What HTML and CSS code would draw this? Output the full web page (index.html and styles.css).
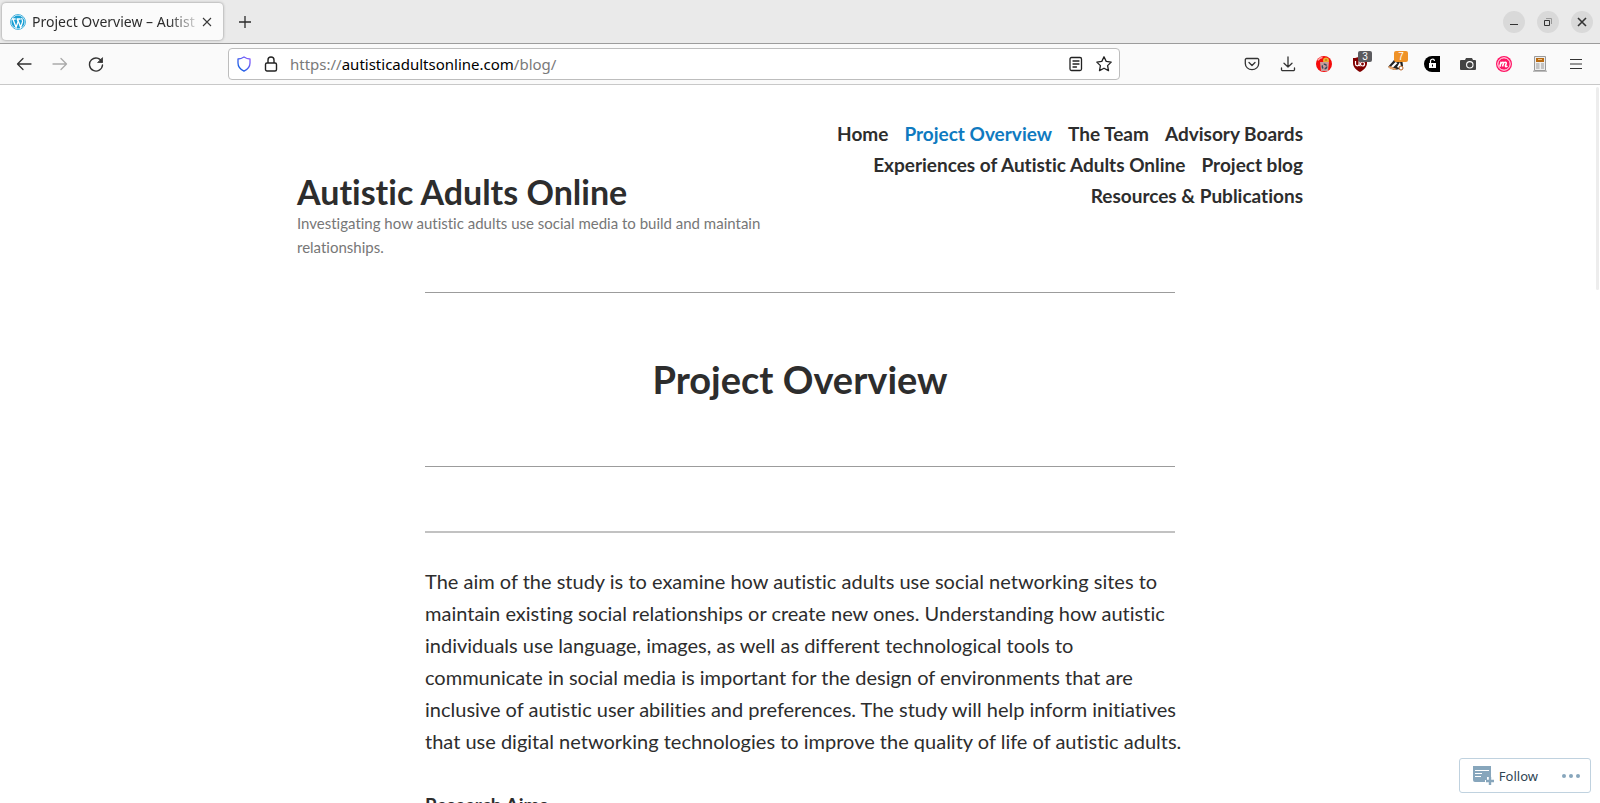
FILE: index.html
```html
<!DOCTYPE html>
<html lang="en">
<head>
<meta charset="utf-8">
<title>Project Overview – Autistic Adults Online</title>
<link rel="stylesheet" href="styles.css">
</head>
<body>
<div class="window">
  <div class="titlebar">
    <div class="tab">
      <svg class="tab-icon" viewBox="0 0 24 24" aria-hidden="true"><circle cx="12" cy="12" r="11.2" fill="#fff" stroke="#1a9fd4" stroke-width="1.2"/><circle cx="12" cy="12" r="9.8" fill="#1a9fd4"/><path d="M3 7.500h5.500M10 7.500h6M4.500 8l4.600 12 3-8.500L10.700 8M11.500 8l4.400 12 2.800-8c.9-3-1.600-3.700-1-6" fill="none" stroke="#fff" stroke-width="1.900"/></svg>
      <span class="tab-title">Project Overview – Autist</span>
      <button class="plain" aria-label="Close tab"><svg width="10" height="10" viewBox="0 0 10 10"><path d="M1 1l8 8M9 1L1 9" stroke="#3a3a3a" stroke-width="1.100"/></svg></button>
    </div>
    <button class="plain new-tab" aria-label="New tab"><svg width="12" height="12" viewBox="0 0 12 12"><path d="M6 0v12M0 6h12" stroke="#2b2b2b" stroke-width="1.300"/></svg></button>
    <div class="controls">
      <button class="control" aria-label="Minimize"><svg width="10" height="10" viewBox="0 0 10 10"><path d="M1 7.500h8" stroke="#333"/></svg></button>
      <button class="control" aria-label="Restore"><svg width="10" height="10" viewBox="0 0 10 10" fill="none"><path d="M3 1.500h5.500V7" stroke="#999"/><path d="M1.500 3.500h5v5h-5z" stroke="#333"/></svg></button>
      <button class="control" aria-label="Close"><svg width="10" height="10" viewBox="0 0 10 10"><path d="M1 1l8 8M9 1L1 9" stroke="#333" stroke-width="1.600"/></svg></button>
    </div>
  </div>
  <div class="toolbar">
    <div class="history">
      <button class="plain" aria-label="Back"><svg width="16" height="16" viewBox="0 0 16 16" fill="none" stroke="#333" stroke-width="1.300" stroke-linecap="round" stroke-linejoin="round"><path d="M15 8H1.500M7 2.500L1.500 8 7 13.500"/></svg></button>
      <button class="plain" aria-label="Forward"><svg width="16" height="16" viewBox="0 0 16 16" fill="none" stroke="#aaa" stroke-width="1.300" stroke-linecap="round" stroke-linejoin="round"><path d="M1 8h13.500M9 2.500L14.500 8 9 13.500"/></svg></button>
      <button class="plain" aria-label="Reload"><svg width="16" height="16" viewBox="0 0 16 16" fill="none" stroke="#333" stroke-width="1.400" stroke-linecap="round"><path d="M14 6A6.500 6.500 0 1 0 14.500 9"/><path d="M14.500 2v4.500H10z" fill="#333" stroke-width=".8"/></svg></button>
    </div>
    <form class="address">
      <svg width="16" height="16" viewBox="0 0 16 16" fill="none"><defs><linearGradient id="shield" x1="0" y1="1" x2="1" y2="0"><stop offset="0" stop-color="#0060df"/><stop offset="1" stop-color="#9059ff"/></linearGradient></defs><path d="M8 1c2 1.300 4 2 6 2v4c0 4-2.500 6.500-6 8.200C4.500 13.500 2 11 2 7V3c2 0 4-.7 6-2z" stroke="url(#shield)" stroke-width="1.300" stroke-linejoin="round"/></svg>
      <svg width="14" height="16" viewBox="0 0 14 16" fill="none" stroke="#222" stroke-width="1.400"><rect x="1.500" y="7" width="11" height="8" rx="1.500"/><path d="M4 7V4a3 3 0 0 1 6 0v3"/></svg>
      <div class="url" role="textbox" aria-label="Address" contenteditable="true"><span>https://</span>autisticadultsonline.com<span>/blog/</span></div>
      <button type="button" class="plain" aria-label="Reader view"><svg width="16" height="16" viewBox="0 0 16 16" fill="none" stroke="#222" stroke-width="1.300" stroke-linecap="round"><rect x="2" y="1.500" width="11.500" height="13" rx="1.500"/><path d="M5 5h6M5 8h6M5 11h3.500"/></svg></button>
      <button type="button" class="plain" aria-label="Bookmark"><svg width="16" height="16" viewBox="0 0 16 16" fill="none" stroke="#222" stroke-width="1.300" stroke-linejoin="round"><path d="M8 .8l2.200 4.600 5 .7-3.600 3.500.9 5L8 12.200l-4.500 2.400.9-5L.8 6.100l5-.7z"/></svg></button>
    </form>
    <div class="extensions">
      <button class="plain" aria-label="Pocket"><svg width="16" height="16" viewBox="0 0 16 16" fill="none" stroke="#333" stroke-width="1.300" stroke-linecap="round" stroke-linejoin="round"><path d="M2.500 2.500h11a1.200 1.200 0 0 1 1.200 1.200V7.500a6.700 6.200 0 0 1-13.400 0V3.700a1.200 1.200 0 0 1 1.200-1.200zM5 6.500l3 3 3-3"/></svg></button>
      <button class="plain" aria-label="Downloads"><svg width="16" height="16" viewBox="0 0 16 16" fill="none" stroke="#333" stroke-width="1.300" stroke-linecap="round" stroke-linejoin="round"><path d="M8 1v10M4 7.300L8 11l4-3.700M1.500 12v1.500a1.200 1.200 0 0 0 1.200 1.200h10.600a1.200 1.200 0 0 0 1.200-1.200V12"/></svg></button>
      <button class="plain" aria-label="Cookie cleaner"><svg width="16" height="16" viewBox="0 0 16 16"><circle cx="8" cy="8" r="8" fill="#f50a0a"/><path d="M2 4.500C3 2.500 5 1.500 6.500 1.500" stroke="#ff9b9b" stroke-width="1.500" fill="none"/><circle cx="10" cy="4.500" r="3" fill="#eab030"/><circle cx="10" cy="4" r=".8" fill="#9d5814"/><path d="M4 6h9l-1 9H5z" fill="#c99b9b"/><circle cx="8.500" cy="10.500" r="2.200" fill="none" stroke="#34495e" stroke-width="1.400" stroke-dasharray="3 1.300"/></svg></button>
      <button class="plain" aria-label="uBlock, 3 blocked"><svg width="16" height="16" viewBox="0 0 16 16"><path d="M8 0c2 1.500 4 2 7 2v5c0 4-3 7-7 9-4-2-7-5-7-9V2c3 0 5-.5 7-2z" fill="#800000"/><path d="M3.500 5v3a1.800 1.800 0 0 0 3.600 0V5v3.500c0 1 1 1.500 1.500 1.500" fill="none" stroke="#fff" stroke-width="1.200"/><circle cx="10.500" cy="8" r="2" fill="none" stroke="#fff" stroke-width="1.200"/></svg><span class="badge">3</span></button>
      <button class="plain" aria-label="Privacy Badger, 7 trackers"><svg width="16" height="16" viewBox="0 0 16 16"><path d="M0 11L6 4l8-2 1 8-3 3-6 1z" fill="#222"/><path d="M3 10.500l4.500-4.500 2 1-4.500 4.500zM9 11l3-5 1 4-2 2z" fill="#fff"/><path d="M0 10.500c2-.5 3.500 0 5 1l4 1.500-2 1-5-1z" fill="#e8a56b"/><circle cx="13" cy="12" r="2" fill="#fff" stroke="#b65d1b"/></svg><span class="badge orange">7</span></button>
      <button class="plain" aria-label="Unlock"><svg width="16" height="16" viewBox="0 0 16 16"><path d="M16 0v16H8A8 8 0 0 1 8 0z" fill="#000"/><path d="M5 7h7v5H5z" fill="#fff"/><path d="M6.500 7V5.500a2 2 0 0 1 4-.500" fill="none" stroke="#fff" stroke-width="1.200"/><path d="M8.500 8.500v2" stroke="#000"/></svg></button>
      <button class="plain" aria-label="Screenshot"><svg width="16" height="16" viewBox="0 0 16 16"><path d="M1 4h4l1-2h6l1 2h2a1 1 0 0 1 1 1v8a1 1 0 0 1-1 1H1a1 1 0 0 1-1-1V5a1 1 0 0 1 1-1z" fill="#444"/><circle cx="9.800" cy="8.800" r="3.200" fill="#444" stroke="#fff" stroke-width="1.100"/></svg></button>
      <button class="plain" aria-label="Mail tool"><svg width="16" height="16" viewBox="0 0 16 16" fill="none"><circle cx="8" cy="8" r="8" fill="#ff1464"/><circle cx="8" cy="8" r="6.200" stroke="#fff" stroke-width="1"/><path d="M3.800 10.800l1.400-5M4.800 7.500c1.500-2 3.200-1.500 2.600 0l-.9 3M7 7.500c1.500-2 3.700-1.500 3.200 0l-.7 2c-.3 1.500 1 1.300 2 .5" stroke="#fff" stroke-width="1.600"/></svg></button>
      <button class="plain" aria-label="News reader"><svg width="16" height="16" viewBox="0 0 16 16"><path d="M1 14.500h14v1.500H1z" fill="#bbb"/><path d="M2.500.5h11v14h-11z" fill="#eee" stroke="#999"/><path d="M4 2h8v4H4z" fill="#b86a12"/><path d="M4 8h3.500M4 10h3.500M4 12h3.500M9 8h3M9 10h3M9 12h3" stroke="#999"/><path d="M6 3.500h4" stroke="#ecc183"/></svg></button>
      <button class="plain" aria-label="Menu"><svg width="16" height="16" viewBox="0 0 16 16"><path d="M2 3.500h12M2 8h12M2 12.500h12" stroke="#333" stroke-width="1.200"/></svg></button>
    </div>
  </div>
  <div class="viewport">
    <div class="scrollbar"></div>
    <header class="site-header">
      <div class="branding">
        <p class="site-title"><a href="#">Autistic Adults Online</a></p>
        <p class="tagline">Investigating how autistic adults use social media to build and maintain relationships.</p>
      </div>
      <nav class="site-nav">
        <a href="#">Home</a>
        <a href="#" class="current">Project Overview</a>
        <a href="#">The Team</a>
        <a href="#">Advisory Boards</a>
        <a href="#">Experiences of Autistic Adults Online</a>
        <a href="#">Project blog</a>
        <a href="#">Resources &amp; Publications</a>
      </nav>
    </header>
    <main class="content">
      <h1 class="page-title">Project Overview</h1>
      <hr class="divider">
      <p class="lead">The aim of the study is to examine how autistic adults use social networking sites to<br>maintain existing social relationships or create new ones. Understanding how autistic<br>individuals use language, images, as well as different technological tools to<br>communicate in social media is important for the design of environments that are<br>inclusive of autistic user abilities and preferences. The study will help inform initiatives<br>that use digital networking technologies to improve the quality of life of autistic adults.</p>
      <h2 class="subhead">Research Aims</h2>
    </main>
    <div class="follow">
      <button class="follow-button"><svg width="22" height="20" viewBox="0 0 22 20"><path d="M0 0h18v11h-4v3h-2v2H2a2 2 0 0 1-2-2z" fill="#87a6bc"/><path d="M2 4.500h14M2 7.500h7M2 10.500h6" stroke="#fff" stroke-width="1.200"/><path d="M17 11v8M13 15h8" stroke="#87a6bc" stroke-width="2.400"/></svg>Follow</button>
      <button class="plain" aria-label="More"><svg width="18" height="4" viewBox="0 0 18 4" fill="#87a6bc"><circle cx="2" cy="2" r="2"/><circle cx="9" cy="2" r="2"/><circle cx="16" cy="2" r="2"/></svg></button>
    </div>
  </div>
</div>
</body>
</html>
```
FILE: styles.css
```css
* { box-sizing: border-box; }
body { margin: 0; background: #fff; font-family: "Noto Sans", "Open Sans", sans-serif; color: #2d2d2d; }
a { color: inherit; text-decoration: none; }
p, h1, h2 { margin: 0; }
svg { display: block; flex: none; }
.window { display: flex; flex-direction: column; height: 100vh; overflow: hidden; }
.plain { display: flex; padding: 0; border: 0; background: none; position: relative; }

.titlebar { display: flex; align-items: center; flex: none; height: 44px; padding: 0 7px 0 2px; background: #eaeaea; border-bottom: 1px solid #9c9c9c; }
.tab { display: flex; align-items: center; width: 221px; height: 37px; padding: 0 11px 0 8px; border-radius: 4px; background: #fbfbfb; box-shadow: 0 0 3px #888; }
.tab-icon { width: 16px; height: 16px; margin-right: 6px; }
.tab-title { flex: 1; overflow: hidden; white-space: nowrap; font-size: 14px; mask-image: linear-gradient(to right, #000 80%, transparent); }
.new-tab { margin-left: 16px; }
.controls { display: flex; gap: 12px; margin-left: auto; }
.control { display: flex; align-items: center; justify-content: center; width: 22px; height: 22px; padding: 0; border: 0; border-radius: 50%; background: #d9d9d9; }

.toolbar { display: flex; align-items: center; flex: none; height: 41px; padding: 0 16px; background: #fafafa; border-bottom: 1px solid #c8c8c8; }
.history { display: flex; gap: 20px; width: 212px; }
.address { display: flex; align-items: center; gap: 12px; flex: 1; max-width: 892px; height: 32px; padding: 0 7px; border: 1px solid #bdbdbd; border-radius: 4px; background: #fff; }
.url { flex: 1; font-size: 15px; color: #000; white-space: nowrap; outline: 0; }
.url span { color: #7a7a7a; }
.extensions { display: flex; gap: 20px; margin-left: auto; }
.badge { position: absolute; left: 6px; top: -5px; width: 14px; height: 11px; border-radius: 2px; background: #5b5b5f; color: #fff; font-size: 10px; line-height: 11px; text-align: center; }
.badge.orange { background: #ef9227; }

.viewport { position: relative; flex: 1; min-height: 0; overflow: hidden; }
.scrollbar { position: absolute; top: 2px; right: 1px; width: 3px; height: 203px; border-radius: 2px; background: #ededed; }
.site-header, .content { font-family: Lato, "Noto Sans", sans-serif; font-variant-ligatures: none; }
.site-header { display: flex; justify-content: space-between; max-width: 1006px; margin: 0 auto; padding: 33px 0; }
.branding { width: 484px; padding-top: 55px; }
.site-title { font-size: 34px; line-height: 38px; font-weight: 700; white-space: nowrap; }
.tagline { font-size: 15px; line-height: 24px; color: #777; }
.site-nav { display: flex; flex-wrap: wrap; justify-content: flex-end; align-content: flex-start; column-gap: 16px; width: 490px; font-size: 19px; line-height: 31px; font-weight: 700; }
.site-nav .current { color: #0f7ac0; }
.content { max-width: 750px; margin: 0 auto; }
.page-title { padding: 60px 0; border-top: 1px solid #9c9c9c; border-bottom: 1px solid #9c9c9c; font-size: 38px; line-height: 53px; text-align: center; }
.divider { height: 2px; margin: 64px 0 32px; border: 0; background: #c2c2c2; }
.lead { font-size: 20px; line-height: 32px; white-space: nowrap; }
.subhead { margin-top: 32px; font-size: 19px; line-height: 32px; }
.follow { position: absolute; right: 9px; bottom: 10px; display: flex; align-items: center; gap: 24px; height: 35px; padding: 0 10px 0 13px; border: 1px solid #c0d2df; border-radius: 3px; background: #fff; }
.follow-button { display: flex; align-items: center; gap: 4px; padding: 0; border: 0; background: none; font: 13px "Noto Sans", sans-serif; color: #2e4453; }
```
